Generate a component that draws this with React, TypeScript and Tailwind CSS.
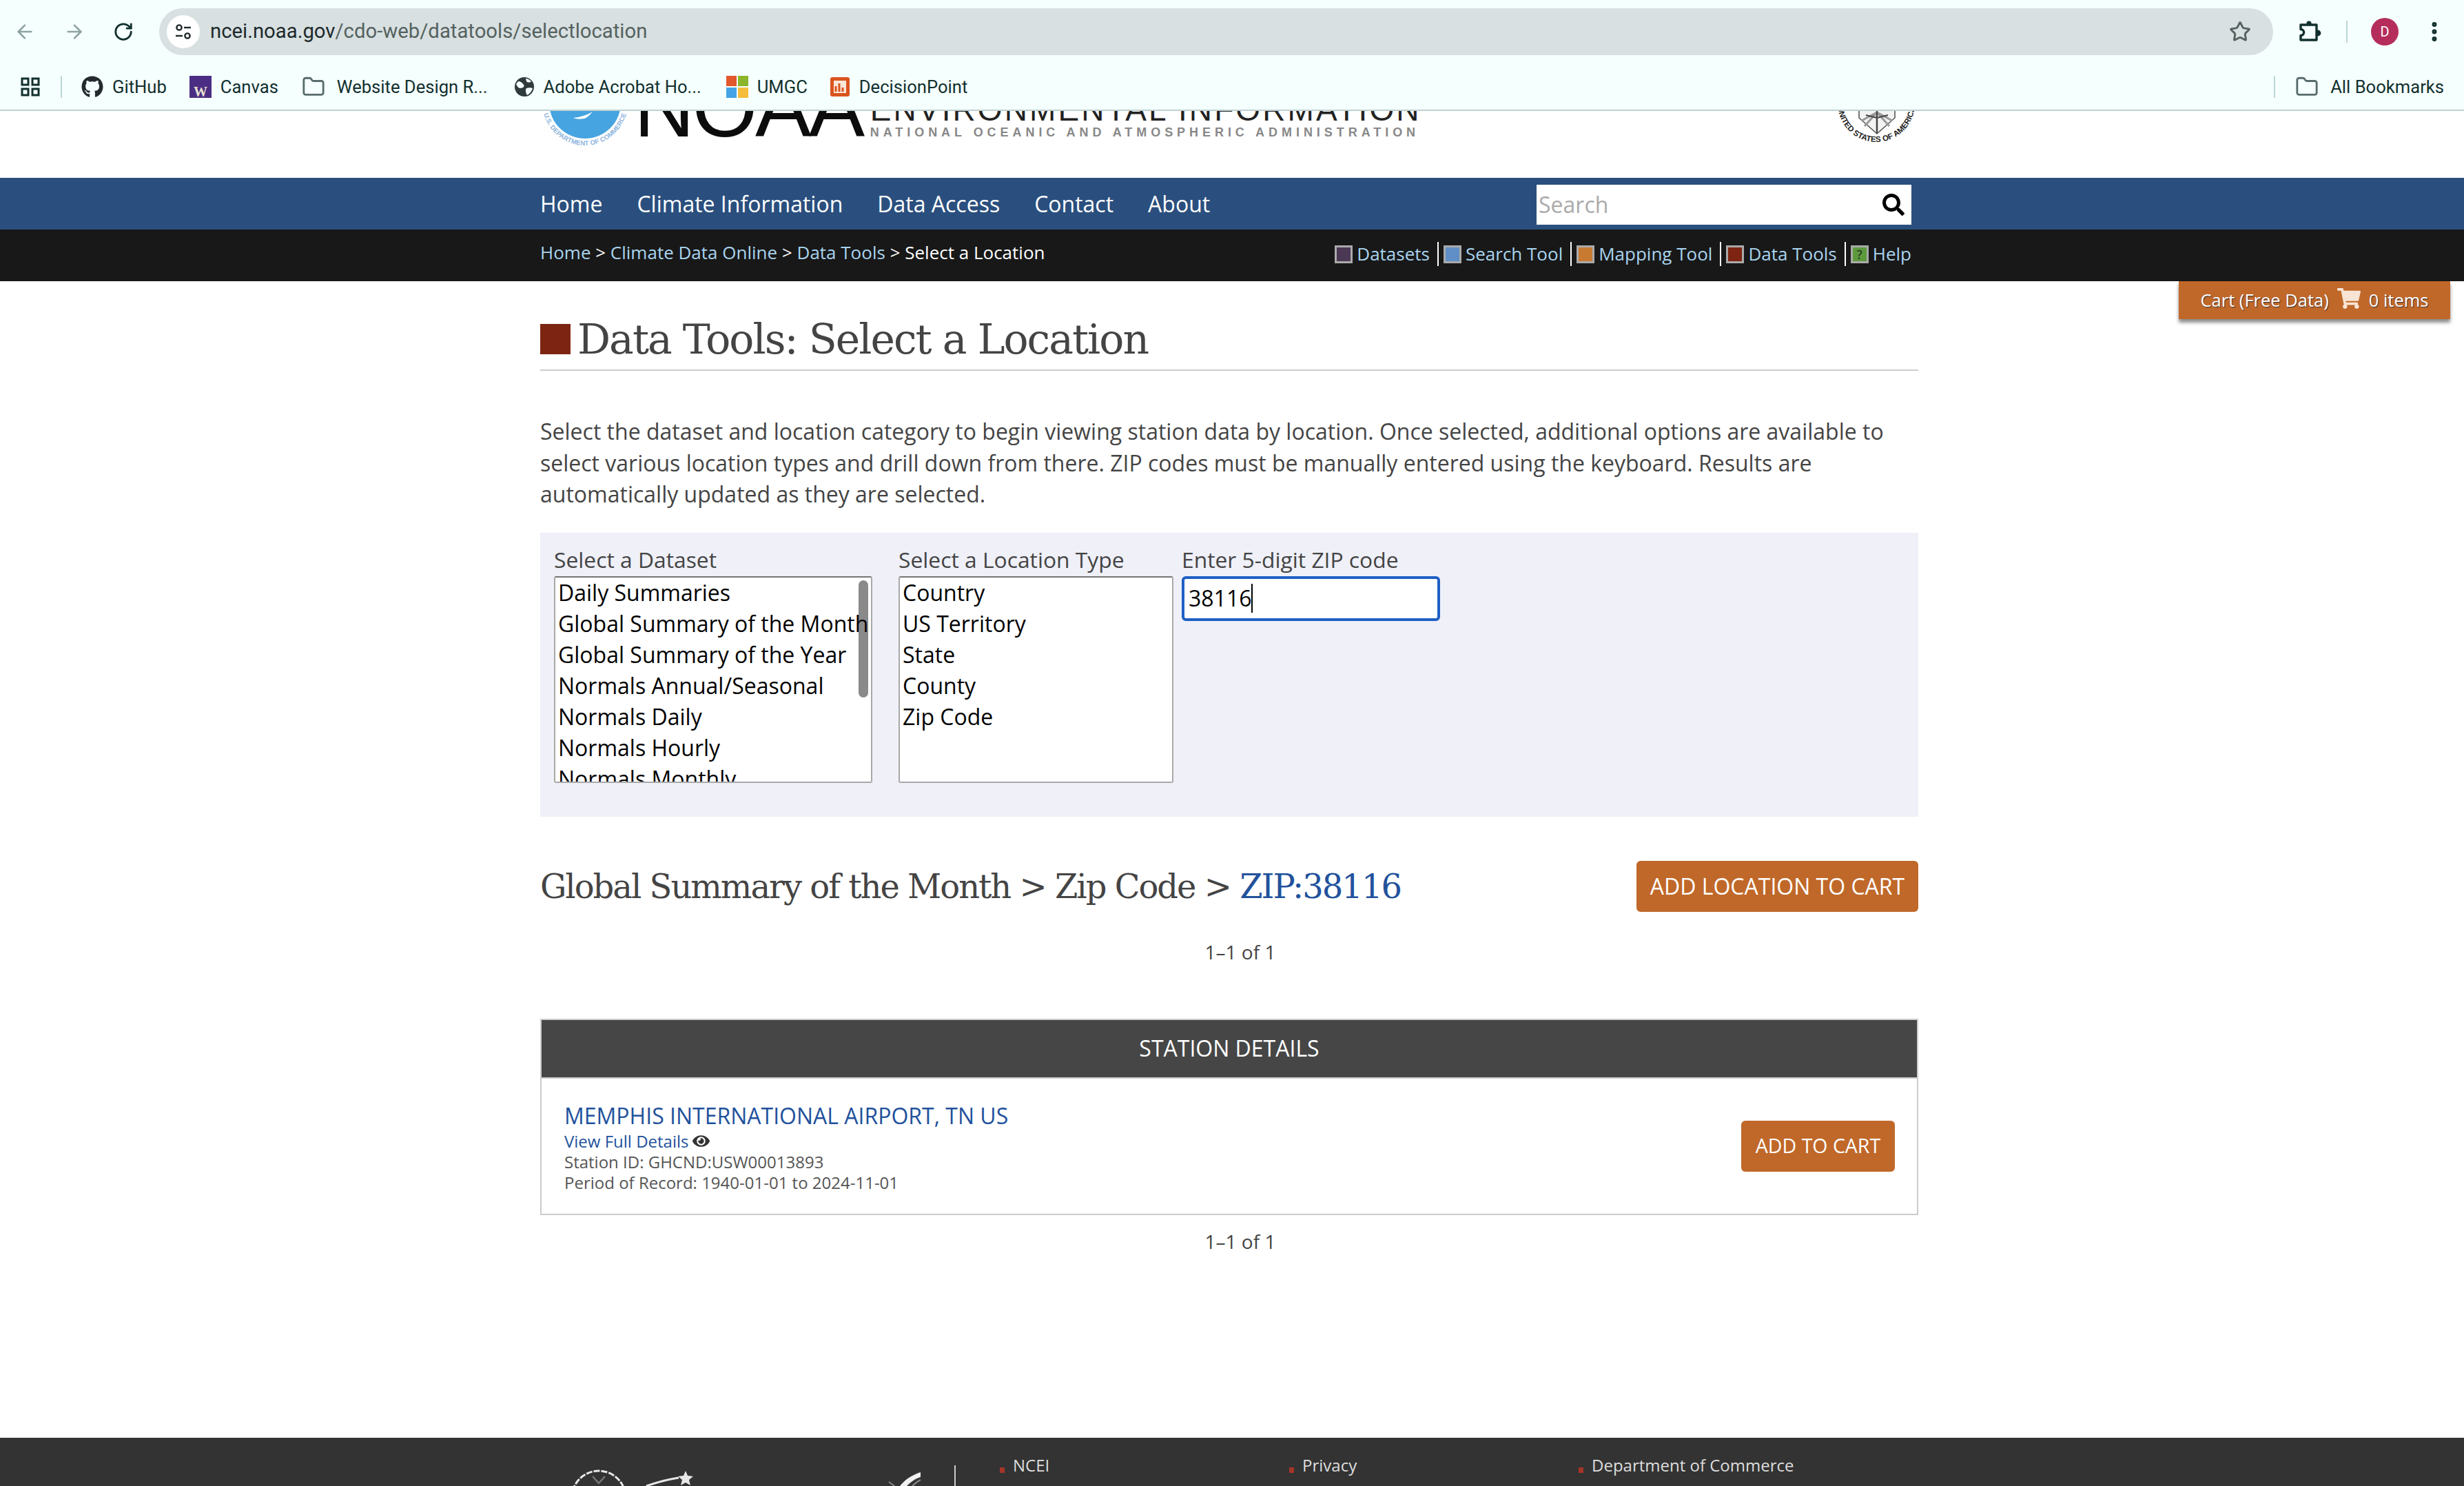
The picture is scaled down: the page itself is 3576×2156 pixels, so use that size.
import React from 'react';
import {
  ArrowLeft,
  ArrowRight,
  RotateCw,
  Star,
  EllipsisVertical,
  Folder,
} from 'lucide-react';
import { FaGithub, FaSearch, FaShoppingCart, FaEye } from 'react-icons/fa';

const TuneIcon = () => (
  <svg width="28" height="28" viewBox="0 0 28 28" fill="none" stroke="#1f2a2c" strokeWidth="2.4">
    <circle cx="8" cy="8" r="3.6" />
    <path d="M15 8h10" />
    <path d="M3 20h10" />
    <circle cx="20" cy="20" r="3.6" />
  </svg>
);

const AppsIcon = () => (
  <svg width="28" height="28" viewBox="0 0 28 28" fill="none" stroke="#12302e" strokeWidth="3">
    <rect x="2" y="2" width="9" height="9" />
    <rect x="17" y="2" width="9" height="9" />
    <rect x="2" y="17" width="9" height="9" />
    <rect x="17" y="17" width="9" height="9" />
  </svg>
);

const ExtensionIcon = () => (
  <svg width="36" height="36" viewBox="0 0 36 36" className="ml-[36px]">
    <circle cx="16" cy="6" r="3.6" fill="#12302e" />
    <circle cx="29" cy="20" r="4.4" fill="#12302e" />
    <path
      d="M4 8h23v22H4v-6.5c3 0 4.6-2 4.6-4.5S7 14.500 4 14.500z"
      fill="#f5fffe"
      stroke="#12302e"
      strokeWidth="3.4"
      strokeLinejoin="round"
    />
  </svg>
);

const CanvasIcon = () => (
  <svg width="32" height="32" viewBox="0 0 32 32">
    <rect width="32" height="32" fill="#4b2e83" />
    <text x="16" y="30" textAnchor="middle" fontFamily="Liberation Serif, serif" fontWeight="700" fontSize="20" fill="#e8e3d3">
      W
    </text>
  </svg>
);

const GlobeIcon = () => (
  <svg width="30" height="30" viewBox="0 0 30 30">
    <circle cx="15" cy="15" r="14" fill="#2f3a3c" />
    <path d="M6 7c4 0 6 2 8 5s-2 5-5 5-5-4-6-6zM18 17c3-1 7-1 9 0-1 4-4 8-8 10-2-3-3-8-1-10zM17 3c3 0 6 2 8 4-2 2-5 2-7 0z" fill="#f5fffe" />
  </svg>
);

const WindowsIcon = () => (
  <div className="grid h-[32px] w-[32px] grid-cols-2 gap-[2px]">
    <div className="bg-[#e2572b]" />
    <div className="bg-[#8bb52b]" />
    <div className="bg-[#45a3e5]" />
    <div className="bg-[#f6bd3b]" />
  </div>
);

const DecisionIcon = () => (
  <svg width="30" height="30" viewBox="0 0 30 30">
    <rect x="1" y="1" width="28" height="28" rx="3" fill="#d9541e" />
    <rect x="6" y="6" width="18" height="18" fill="#fbe6d8" />
    <path d="M9 22v-8M14 22v-12M19 22v-6" stroke="#d9541e" strokeWidth="3" />
  </svg>
);

const Bookmark = ({ icon, label, className }: { icon: React.ReactNode; label: string; className: string }) => (
  <div className={`flex items-center ${className}`}>
    {icon}
    <span className="ml-[13px] whitespace-nowrap">{label}</span>
  </div>
);

const BrowserChrome = () => (
  <div className="h-[161px] border-b-2 border-[#bfd0d0] bg-[#f5fffe] font-['Roboto',sans-serif] text-[#12302e]">
    <div className="flex h-[92px] items-center">
      <ArrowLeft className="ml-[20px] text-[#8fa3a3]" size={32} strokeWidth={2} />
      <ArrowRight className="ml-[40px] text-[#8fa3a3]" size={32} strokeWidth={2} />
      <RotateCw className="ml-[40px] text-[#12302e]" size={30} strokeWidth={2.2} />
      <div className="ml-[37px] flex h-[68px] w-[3068px] items-center rounded-full bg-[#d8e0e1] pl-[11px]">
        <div className="flex h-[48px] w-[48px] items-center justify-center rounded-full bg-white">
          <TuneIcon />
        </div>
        <span className="ml-[15px] text-[29.3px] text-[#1d2a2c]">
          ncei.noaa.gov<span className="text-[#55625f]">/cdo-web/datatools/selectlocation</span>
        </span>
        <Star className="ml-auto mr-[32px] text-[#55625f]" size={32} strokeWidth={2.2} />
      </div>
      <ExtensionIcon />
      <div className="ml-[34px] h-[32px] w-[2px] bg-[#bcd6d6]" />
      <div className="ml-[34px] flex h-[40px] w-[40px] items-center justify-center rounded-full bg-[#b52d5b] text-[20px] text-white">
        D
      </div>
      <EllipsisVertical className="ml-[34px] text-[#12302e]" size={36} strokeWidth={2.6} />
    </div>
    <div className="flex h-[62px] items-center pt-[6px] text-[25.6px]">
      <div className="ml-[30px]">
        <AppsIcon />
      </div>
      <div className="ml-[30px] h-[32px] w-[2px] bg-[#bcd6d6]" />
      <Bookmark className="ml-[28px]" icon={<FaGithub size={32} color="#24292e" />} label="GitHub" />
      <Bookmark className="ml-[33px]" icon={<CanvasIcon />} label="Canvas" />
      <Bookmark className="ml-[34px]" icon={<Folder size={34} color="#566b6a" strokeWidth={2} className="mr-[4px]" />} label="Website Design R..." />
      <Bookmark className="ml-[38px]" icon={<GlobeIcon />} label="Adobe Acrobat Ho..." />
      <Bookmark className="ml-[36px]" icon={<WindowsIcon />} label="UMGC" />
      <Bookmark className="ml-[32px]" icon={<DecisionIcon />} label="DecisionPoint" />
      <div className="ml-auto h-[32px] w-[2px] bg-[#bcd6d6]" />
      <Bookmark className="ml-[29px] mr-[29px]" icon={<Folder size={34} color="#566b6a" strokeWidth={2} className="mr-[4px]" />} label="All Bookmarks" />
    </div>
  </div>
);

const GlobeDrawing = () => (
  <svg width="130" height="130" viewBox="0 0 130 130" className="mt-[-77px] shrink-0">
    <defs>
      <path id="globeArc" d="M3 65a62 62 0 0 0 124 0" />
    </defs>
    <circle cx="65" cy="65" r="52" fill="#46a4e0" />
    <path d="M48 87c10-1 20-4 28-9-4 5-8 9-12 10-6 1-12 1-16-1z" fill="#ffffff" />
    <text fontFamily="Liberation Sans, sans-serif" fontWeight="700" fontSize="9.500" fill="#8db4dd">
      <textPath href="#globeArc" startOffset="50%" textAnchor="middle">
        U.S. DEPARTMENT OF COMMERCE
      </textPath>
    </text>
  </svg>
);

const SealDrawing = () => (
  <svg width="118" height="118" viewBox="0 0 118 118" className="mt-[-70px]">
    <defs>
      <path id="sealArc" d="M3 59a56 56 0 0 0 112 0" />
    </defs>
    <path d="M34 40h52v40l-26 23-26-23z" fill="#f3f3f3" stroke="#555" strokeWidth="1.6" />
    <path d="M60 72v28M60 72 38 84M60 72l22 12M60 72 42 92M60 72l18 20" stroke="#999" strokeWidth="3" fill="none" />
    <path d="M60 70v32M44 76l16 4 16-4" stroke="#444" strokeWidth="2" fill="none" />
    <text fontFamily="Liberation Sans, sans-serif" fontWeight="700" fontSize="11.500" fill="#222">
      <textPath href="#sealArc" startOffset="50%" textAnchor="middle">
        UNITED STATES OF AMERICA
      </textPath>
    </text>
  </svg>
);

const LogoStrip = () => (
  <div className="h-[97px] overflow-hidden bg-white">
    <div className="ml-[784px] flex h-[51px] w-[2000px] items-start">
      <GlobeDrawing />
      <div className="ml-[6px] mt-[-66px] shrink-0 font-['Liberation_Sans',sans-serif] text-[122px] leading-[122px] tracking-[-3.5px] text-[#0c0c0c]">
        NOAA
      </div>
      <div className="ml-[11px] mt-[-25px] w-[800px] shrink-0 font-['Liberation_Sans',sans-serif]">
        <div className="whitespace-nowrap text-[46px] leading-[46px] tracking-[3.1px] text-[#222]">ENVIRONMENTAL INFORMATION</div>
        <div className="whitespace-nowrap text-[18px] font-bold leading-[20px] tracking-[5.950px] text-[#888]">
          NATIONAL OCEANIC AND ATMOSPHERIC ADMINISTRATION
        </div>
      </div>
      <div className="ml-auto mr-[2px]">
        <SealDrawing />
      </div>
    </div>
  </div>
);

const NavBar = () => (
  <div className="h-[75px] bg-[#2a4f7e]">
    <div className="ml-[784px] flex h-full w-[1990px] items-center justify-between">
      <nav className="flex gap-[50px] text-[32px] text-white">
        <span>Home</span>
        <span>Climate Information</span>
        <span>Data Access</span>
        <span>Contact</span>
        <span>About</span>
      </nav>
      <div className="mt-[3px] flex h-[58px] w-[544px] items-center justify-between bg-white pl-[3px] pr-[10px]">
        <span className="text-[32px] text-[#aaaaaa]">Search</span>
        <FaSearch size={32} color="#000" />
      </div>
    </div>
  </div>
);

const subLinks = [
  { label: 'Datasets', color: 'bg-[#4b3854]', mark: '' },
  { label: 'Search Tool', color: 'bg-[#5f8fc6]', mark: '' },
  { label: 'Mapping Tool', color: 'bg-[#c87a33]', mark: '' },
  { label: 'Data Tools', color: 'bg-[#7d2412]', mark: '' },
  { label: 'Help', color: 'bg-[#5c9a3c]', mark: '?' },
];

const SubBar = () => (
  <div className="h-[75px] bg-[#181818] text-[26px]">
    <div className="ml-[784px] flex h-full w-[1990px] items-center justify-between">
      <div className="pb-[8px] text-[#a9d4ee]">
        Home <span className="text-white">&gt;</span> Climate Data Online <span className="text-white">&gt;</span> Data Tools{' '}
        <span className="text-white">&gt; Select a Location</span>
      </div>
      <div className="flex items-center pb-[4px]">
        {subLinks.map((link, i) => (
          <div key={link.label} className="flex items-center">
            {i > 0 && <div className="ml-[11px] mr-[7px] h-[35px] w-[2px] bg-white" />}
            <div className={`flex h-[26px] w-[26px] items-center justify-center border-[3px] border-[#aaaaaa] text-[18px] leading-none text-[#222] ${link.color}`}>
              {link.mark}
            </div>
            <span className="ml-[6px] text-[#a9d4ee]">{link.label}</span>
          </div>
        ))}
      </div>
    </div>
  </div>
);

const CartTab = () => (
  <div className="absolute left-[3162px] top-[408px] flex h-[55px] w-[394px] items-center justify-center gap-[12px] bg-[#c06829] text-[25.500px] text-white shadow-[0_5px_5px_rgba(0,0,0,0.45)] [text-shadow:1px_1px_1px_#333]">
    <span>Cart (Free Data)</span>
    <FaShoppingCart size={34} color="#f8e4d4" className="mb-[6px]" />
    <span>0 items</span>
  </div>
);

const datasets = [
  'Daily Summaries',
  'Global Summary of the Month',
  'Global Summary of the Year',
  'Normals Annual/Seasonal',
  'Normals Daily',
  'Normals Hourly',
  'Normals Monthly',
];

const locationTypes = ['Country', 'US Territory', 'State', 'County', 'Zip Code'];

const ListBox = ({ items, className, scroll }: { items: string[]; className: string; scroll?: boolean }) => (
  <div className={`relative h-[300px] overflow-hidden rounded-[3px] border-2 border-[#a9a9a9] border-t-[#767676] bg-white pl-[4px] text-[32px] leading-[45px] text-black ${className}`}>
    {scroll && <div className="absolute right-[4px] top-[4px] h-[170px] w-[14px] rounded-full bg-[#8a8a8a]" />}
    <div className="relative -mt-[1px]">
      {items.map((item) => (
        <div key={item} className="whitespace-nowrap">
          {item}
        </div>
      ))}
    </div>
  </div>
);

const FilterPanel = () => (
  <div className="mt-[33px] flex h-[412px] bg-[#eff0f8] pl-[20px] pt-[15px] text-[#444]">
    <div className="w-[500px]">
      <div className="text-[31.800px] font-medium leading-[48px]">Select a Dataset</div>
      <ListBox items={datasets} className="w-[462px]" scroll />
    </div>
    <div className="w-[411px]">
      <div className="text-[31.800px] font-medium leading-[48px]">Select a Location Type</div>
      <ListBox items={locationTypes} className="w-[399px]" />
    </div>
    <div>
      <div className="text-[31.800px] font-medium leading-[48px]">Enter 5-digit ZIP code</div>
      <div className="flex h-[65px] w-[375px] items-center rounded-[6px] border-[4px] border-[#1f5fc4] bg-white pl-[6px] text-[32px] text-black">
        38116
        <span className="h-[42px] w-[2px] bg-black" />
      </div>
    </div>
  </div>
);

const StationTable = () => (
  <div className="mt-[75px] border-2 border-[#cccccc]">
    <div className="flex h-[83px] items-center justify-center bg-[#464646] text-[32px] text-white">STATION DETAILS</div>
    <div className="flex h-[198px] items-center justify-between border-t-2 border-[#cccccc] pl-[33px] pr-[32px]">
      <div className="pt-[2px] text-[#555]">
        <div className="text-[32px] leading-[44px] text-[#22529c]">MEMPHIS INTERNATIONAL AIRPORT, TN US</div>
        <div className="flex items-center gap-[6px] text-[24px] leading-[30px] text-[#22529c]">
          View Full Details <FaEye size={25} color="#333" />
        </div>
        <div className="text-[24px] leading-[30px]">Station ID: GHCND:USW00013893</div>
        <div className="text-[24px] leading-[30px]">Period of Record: 1940-01-01 to 2024-11-01</div>
      </div>
      <button className="h-[74px] w-[223px] rounded-[6px] bg-[#c06829] text-[28.500px] text-white">ADD TO CART</button>
    </div>
  </div>
);

const MainContent = () => (
  <div className="ml-[784px] h-[1678px] w-[2000px] text-[#444]">
    <div className="flex h-[130px] items-end border-b-2 border-[#cccccc] pb-[22px]">
      <div className="h-[44px] w-[44px] bg-[#7d2412]" />
      <h1 className="-mb-[8px] ml-[10px] whitespace-nowrap font-['DejaVu_Serif',serif] text-[60px] leading-[60px] tracking-[-2px]">
        Data Tools: Select a Location
      </h1>
    </div>
    <p className="mt-[65px] text-[32px] leading-[45.6px]">
      Select the dataset and location category to begin viewing station data by location. Once selected, additional options are available to
      select various location types and drill down from there. ZIP codes must be manually entered using the keyboard. Results are
      automatically updated as they are selected.
    </p>
    <FilterPanel />
    <div className="mt-[64px] flex h-[74px] items-center justify-between">
      <h2 className="whitespace-nowrap font-['DejaVu_Serif',serif] text-[48px] tracking-[-2px]">
        Global Summary of the Month &gt; Zip Code &gt; <span className="text-[#22529c]">ZIP:38116</span>
      </h2>
      <button className="h-[74px] w-[409px] rounded-[6px] bg-[#c06829] text-[32px] text-white">ADD LOCATION TO CART</button>
    </div>
    <div className="mt-[36px] pl-[32px] text-center text-[28px] leading-[44px]">1–1 of 1</div>
    <StationTable />
    <div className="mt-[16px] pl-[32px] text-center text-[28px] leading-[44px]">1–1 of 1</div>
  </div>
);

const FooterLink = ({ label }: { label: string }) => (
  <div className="flex w-[420px] items-start">
    <span className="mt-[21px] h-[8px] w-[7px] bg-[#a5352a]" />
    <span className="ml-[12px] text-[24px] text-[#dddddd]">{label}</span>
  </div>
);

const Footer = () => (
  <div className="h-[70px] overflow-hidden bg-[#333333]">
    <div className="ml-[784px] flex h-full w-[2000px] pt-[22px]">
      <svg width="560" height="46" viewBox="0 0 560 46" fill="none" stroke="#e8e8e8" strokeWidth="3" className="ml-[40px] mt-[2px]">
        <circle cx="45" cy="63" r="39" strokeDasharray="9 2" />
        <path d="M36 32l9 10 9-10" stroke="#777" strokeWidth="2.5" />
        <path d="M114 46Q140 37 161 34" />
        <path d="m171 24 3 7 8 1-6 5 2 8-7-4-7 4 2-8-6-5 8-1z" fill="#e8e8e8" stroke="none" />
        <path d="M482 46C490 36 500 30 512 26V33C503 36 497 41 492 46z" fill="#f2f2f2" stroke="none" />
        <path d="M500 46C505 41 508 39 512 37M466 40l8 6" stroke="#888" strokeWidth="2" />
      </svg>
      <div className="ml-[1px] mt-[18px] h-[60px] w-[2px] bg-[#cccccc]" />
      <div className="ml-[64px] flex">
        <FooterLink label="NCEI" />
        <FooterLink label="Privacy" />
        <FooterLink label="Department of Commerce" />
      </div>
    </div>
  </div>
);

const App: React.FC = () => {
  return (
    <div className="relative h-[2156px] w-[3576px] overflow-hidden bg-white font-['Open_Sans',sans-serif]">
      <BrowserChrome />
      <LogoStrip />
      <NavBar />
      <SubBar />
      <CartTab />
      <MainContent />
      <Footer />
    </div>
  );
};

export default App;
